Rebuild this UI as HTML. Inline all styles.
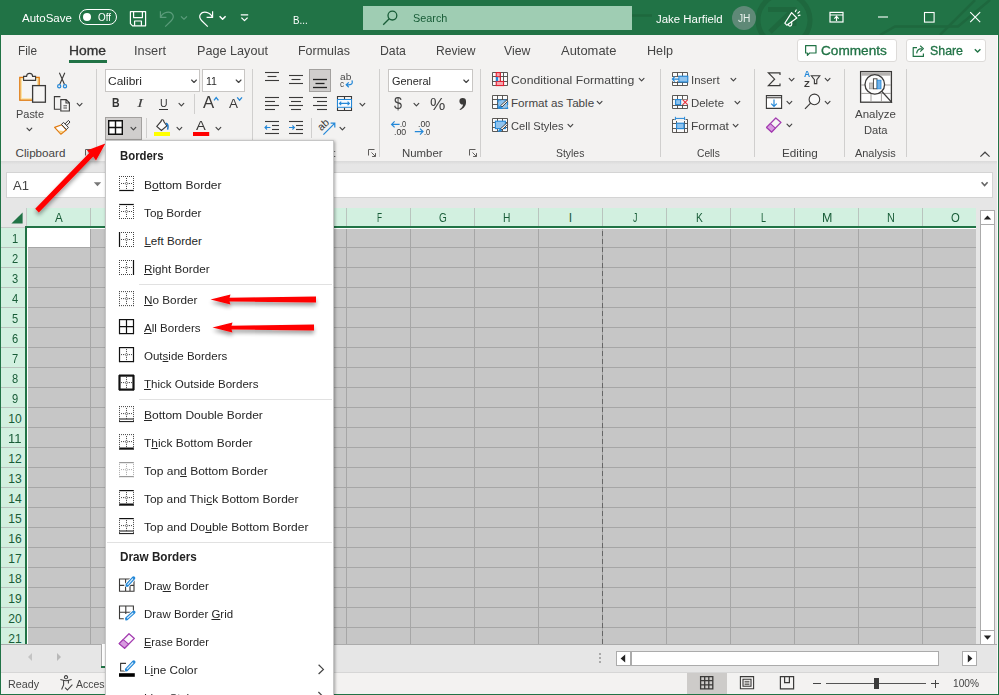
<!DOCTYPE html>
<html lang="en"><head><meta charset="utf-8"><title>Excel - Borders</title>
<style>
html,body{margin:0;padding:0}
body{width:999px;height:695px;overflow:hidden;position:relative;background:#f3f2f1;font-family:"Liberation Sans",sans-serif;}
.t{position:absolute;white-space:nowrap;line-height:1;transform-origin:0 50%;}
.t u{text-decoration:underline;text-underline-offset:1px;text-decoration-thickness:1px}
div{box-sizing:border-box}
svg{position:absolute;left:0;top:0;overflow:visible}
</style></head><body>
<div class="titlebar" style="position:absolute;left:0px;top:0px;width:999px;height:35px;background:#217346;"></div>
<svg width="999" height="35" viewBox="0 0 999 35"><clipPath id="tbc"><rect x="0" y="0" width="999" height="35"/></clipPath><g clip-path="url(#tbc)" fill="none" stroke="#1e683e"><circle cx="784" cy="20" r="26" stroke-width="5"/><path d="M768 9.5H794V26M793 10L770 32" stroke-width="5"/><path d="M880 35L895 26.5H958L990 0" stroke-width="2.5"/><path d="M940 35L975 0" stroke-width="2.5"/><path d="M632 15.5H652" stroke-width="2.5"/></g></svg>
<span class="t" style="left:22.00px;top:12px;font-size:11.64px;color:#fff;transform:scaleX(0.9901);">AutoSave</span>
<div style="position:absolute;left:79px;top:9px;width:38px;height:16px;border:1px solid #fff;border-radius:8px;"></div>
<div style="position:absolute;left:83px;top:13px;width:8px;height:8px;background:#fff;border-radius:4px;"></div>
<span class="t" style="left:98.00px;top:12px;font-size:10.67px;color:#fff;transform:scaleX(0.9244);">Off</span>
<span class="t" style="left:293.40px;top:14px;font-size:11.64px;color:#fff;transform:scaleX(0.8373);">B...</span>
<div class="search" style="position:absolute;left:363px;top:6px;width:269px;height:24px;background:#9fcdb3;"></div>
<span class="t" style="left:413.00px;top:12px;font-size:11.64px;color:#185c37;transform:scaleX(0.9329);">Search</span>
<span class="t" style="left:655.60px;top:13px;font-size:11.64px;color:#fff;transform:scaleX(0.9833);">Jake Harfield</span>
<div style="position:absolute;left:732px;top:6px;width:24px;height:24px;background:#5f8977;border-radius:12px;"></div>
<span class="t" style="left:737.50px;top:14px;font-size:10.19px;color:#e8f0ec;transform:scaleX(1.0050);">JH</span>
<span class="t" style="left:18.00px;top:45px;font-size:12.12px;color:#444;transform:scaleX(0.9744);">File</span>
<span class="t" style="left:134.00px;top:45px;font-size:12.12px;color:#444;transform:scaleX(1.0557);">Insert</span>
<span class="t" style="left:197.00px;top:45px;font-size:12.12px;color:#444;transform:scaleX(1.0432);">Page Layout</span>
<span class="t" style="left:298.00px;top:45px;font-size:12.12px;color:#444;transform:scaleX(1.0297);">Formulas</span>
<span class="t" style="left:380.40px;top:45px;font-size:12.12px;color:#444;transform:scaleX(1.0146);">Data</span>
<span class="t" style="left:436.40px;top:45px;font-size:12.12px;color:#444;transform:scaleX(0.9947);">Review</span>
<span class="t" style="left:504.00px;top:45px;font-size:12.12px;color:#444;transform:scaleX(1.0105);">View</span>
<span class="t" style="left:561.00px;top:45px;font-size:12.12px;color:#444;transform:scaleX(1.0680);">Automate</span>
<span class="t" style="left:647.40px;top:45px;font-size:12.12px;color:#444;transform:scaleX(1.0426);">Help</span>
<span class="t" style="left:69.00px;top:45px;font-size:12.12px;color:#333;-webkit-text-stroke:.3px currentColor;transform:scaleX(1.1451);">Home</span>
<div style="position:absolute;left:69px;top:60px;width:38px;height:3px;background:#217346;"></div>
<div style="position:absolute;left:797px;top:38.5px;width:99.5px;height:23px;background:#fff;border:1px solid #dddbd9;border-radius:3px;"></div>
<div style="position:absolute;left:905.5px;top:38.5px;width:80px;height:23px;background:#fff;border:1px solid #dddbd9;border-radius:3px;"></div>
<span class="t" style="left:821.00px;top:45px;font-size:12.12px;color:#217346;-webkit-text-stroke:.3px currentColor;transform:scaleX(1.1236);">Comments</span>
<span class="t" style="left:929.50px;top:45px;font-size:12.12px;color:#217346;-webkit-text-stroke:.3px currentColor;transform:scaleX(1.0213);">Share</span>
<div style="position:absolute;left:0px;top:161px;width:999px;height:8px;background:linear-gradient(#d9d9d9,#e6e6e6 45%,#e6e6e6);"></div>
<span class="t" style="left:162.00px;top:147px;font-size:11.64px;color:#444;transform:scaleX(1.0295);">Font</span>
<span class="t" style="left:281.00px;top:147px;font-size:11.64px;color:#444;transform:scaleX(1.0512);">Alignment</span>
<div style="position:absolute;left:96px;top:69px;width:1px;height:88px;background:#d0cfce;"></div>
<div style="position:absolute;left:252px;top:69px;width:1px;height:88px;background:#d0cfce;"></div>
<div style="position:absolute;left:379px;top:69px;width:1px;height:88px;background:#d0cfce;"></div>
<div style="position:absolute;left:480px;top:69px;width:1px;height:88px;background:#d0cfce;"></div>
<div style="position:absolute;left:660px;top:69px;width:1px;height:88px;background:#d0cfce;"></div>
<div style="position:absolute;left:754px;top:69px;width:1px;height:88px;background:#d0cfce;"></div>
<div style="position:absolute;left:844px;top:69px;width:1px;height:88px;background:#d0cfce;"></div>
<div style="position:absolute;left:906px;top:69px;width:1px;height:88px;background:#d0cfce;"></div>
<span class="t" style="left:16.40px;top:108px;font-size:11.64px;color:#444;transform:scaleX(0.9412);">Paste</span>
<span class="t" style="left:15.60px;top:147px;font-size:11.64px;color:#444;">Clipboard</span>
<div style="position:absolute;left:105px;top:69px;width:95px;height:23px;background:#fff;border:1px solid #c8c6c4;"></div>
<span class="t" style="left:108.00px;top:75px;font-size:11.64px;color:#2a2a2a;transform:scaleX(1.0303);">Calibri</span>
<div style="position:absolute;left:202px;top:69px;width:43px;height:23px;background:#fff;border:1px solid #c8c6c4;"></div>
<span class="t" style="left:205.60px;top:75px;font-size:11.64px;color:#2a2a2a;transform:scaleX(0.9119);">11</span>
<span class="t" style="left:112.40px;top:97px;font-size:12.12px;color:#333;font-weight:700;transform:scaleX(0.8686);">B</span>
<span class="t" style="left:137.09px;top:97px;font-size:12.61px;color:#444;font-style:italic;font-family:Liberation Serif,serif;transform:scaleX(1.4545);">I</span>
<span class="t" style="left:159.60px;top:97px;font-size:11.64px;color:#333;transform:scaleX(0.9007);">U</span>
<div style="position:absolute;left:159px;top:108.5px;width:9px;height:1px;background:#333;"></div>
<div style="position:absolute;left:194px;top:94px;width:1px;height:20px;background:#d0cfce;"></div>
<div style="position:absolute;left:105px;top:117px;width:37px;height:23px;background:#d0cecd;border:1px solid #a3a19f;"></div>
<div style="position:absolute;left:146px;top:118px;width:1px;height:20px;background:#d0cfce;"></div>
<div style="position:absolute;left:309px;top:69px;width:22px;height:23px;background:#d0cecd;border:1px solid #a3a19f;"></div>
<div style="position:absolute;left:311px;top:118px;width:1px;height:20px;background:#d0cfce;"></div>
<div style="position:absolute;left:388px;top:69px;width:85px;height:23px;background:#fff;border:1px solid #c8c6c4;"></div>
<span class="t" style="left:391.60px;top:75px;font-size:11.64px;color:#2a2a2a;transform:scaleX(0.9412);">General</span>
<span class="t" style="left:394.40px;top:95px;font-size:16.49px;color:#444;transform:scaleX(0.8707);">$</span>
<span class="t" style="left:430.00px;top:96px;font-size:16.49px;color:#444;transform:scaleX(1.0485);">%</span>
<span class="t" style="left:402.40px;top:147px;font-size:11.64px;color:#444;transform:scaleX(0.9813);">Number</span>
<span class="t" style="left:511.00px;top:74px;font-size:11.64px;color:#444;transform:scaleX(1.0536);">Conditional Formatting</span>
<span class="t" style="left:511.00px;top:97px;font-size:11.64px;color:#444;">Format as Table</span>
<span class="t" style="left:511.00px;top:120px;font-size:11.64px;color:#444;transform:scaleX(0.9564);">Cell Styles</span>
<span class="t" style="left:556.00px;top:147px;font-size:11.64px;color:#444;transform:scaleX(0.8963);">Styles</span>
<span class="t" style="left:691.00px;top:74px;font-size:11.64px;color:#444;transform:scaleX(0.9820);">Insert</span>
<span class="t" style="left:691.00px;top:97px;font-size:11.64px;color:#444;transform:scaleX(0.9814);">Delete</span>
<span class="t" style="left:691.00px;top:120px;font-size:11.64px;color:#444;transform:scaleX(1.0305);">Format</span>
<span class="t" style="left:696.60px;top:147px;font-size:11.64px;color:#444;transform:scaleX(0.8812);">Cells</span>
<span class="t" style="left:781.80px;top:147px;font-size:11.64px;color:#444;transform:scaleX(1.0095);">Editing</span>
<span class="t" style="left:855.00px;top:108px;font-size:11.64px;color:#444;transform:scaleX(0.9894);">Analyze</span>
<span class="t" style="left:864.40px;top:124px;font-size:11.64px;color:#444;transform:scaleX(0.9584);">Data</span>
<span class="t" style="left:855.00px;top:147px;font-size:11.64px;color:#444;transform:scaleX(0.9406);">Analysis</span>
<div style="position:absolute;left:0px;top:169px;width:999px;height:39px;background:#e6e6e6;"></div>
<div style="position:absolute;left:6px;top:172px;width:100px;height:26px;background:#fff;border:1px solid #d4d4d4;"></div>
<span class="t" style="left:13.00px;top:180px;font-size:12.61px;color:#444;transform:scaleX(1.0364);">A1</span>
<div style="position:absolute;left:333px;top:172px;width:660px;height:26px;background:#fff;border:1px solid #d4d4d4;border-left:none;"></div>
<div style="position:absolute;left:0px;top:208px;width:999px;height:437px;background:#e6e6e6;"></div>
<div class="colhead" style="position:absolute;left:1px;top:208px;width:975px;height:18px;background:#d2f0e0;"></div>
<div class="rowhead" style="position:absolute;left:1px;top:228px;width:24px;height:416px;background:#d2f0e0;"></div>
<div style="position:absolute;left:1px;top:208px;width:25px;height:20px;background:#e6e6e6;"></div>
<div style="position:absolute;left:26px;top:208px;width:1px;height:18px;background:#c9c9c9;"></div>
<div style="position:absolute;left:1px;top:227px;width:24px;height:1px;background:#c9c9c9;"></div>
<div class="cells" style="position:absolute;left:27px;top:228px;width:949px;height:416px;background:#c6c6c6;"></div>
<div style="position:absolute;left:28px;top:229px;width:62px;height:18px;background:#fff;"></div>
<span class="t" style="left:55.10px;top:212px;font-size:12.12px;color:#185c37;transform:scaleX(0.9600);">A</span>
<div style="position:absolute;left:90px;top:208px;width:1px;height:18px;background:#b9c4be;"></div>
<div style="position:absolute;left:90px;top:229px;width:1px;height:415px;background:#a6a6a6;"></div>
<span class="t" style="left:119.90px;top:212px;font-size:12.12px;color:#185c37;transform:scaleX(0.7690);">B</span>
<div style="position:absolute;left:154px;top:208px;width:1px;height:18px;background:#b9c4be;"></div>
<div style="position:absolute;left:154px;top:229px;width:1px;height:415px;background:#a6a6a6;"></div>
<span class="t" style="left:183.70px;top:212px;font-size:12.12px;color:#185c37;transform:scaleX(0.7543);">C</span>
<div style="position:absolute;left:218px;top:208px;width:1px;height:18px;background:#b9c4be;"></div>
<div style="position:absolute;left:218px;top:229px;width:1px;height:415px;background:#a6a6a6;"></div>
<span class="t" style="left:247.30px;top:212px;font-size:12.12px;color:#185c37;transform:scaleX(0.8457);">D</span>
<div style="position:absolute;left:282px;top:208px;width:1px;height:18px;background:#b9c4be;"></div>
<div style="position:absolute;left:282px;top:229px;width:1px;height:415px;background:#a6a6a6;"></div>
<span class="t" style="left:312.40px;top:212px;font-size:12.12px;color:#185c37;transform:scaleX(0.6450);">E</span>
<div style="position:absolute;left:346px;top:208px;width:1px;height:18px;background:#b9c4be;"></div>
<div style="position:absolute;left:346px;top:229px;width:1px;height:415px;background:#a6a6a6;"></div>
<span class="t" style="left:376.50px;top:212px;font-size:12.12px;color:#185c37;transform:scaleX(0.6780);">F</span>
<div style="position:absolute;left:410px;top:208px;width:1px;height:18px;background:#b9c4be;"></div>
<div style="position:absolute;left:410px;top:229px;width:1px;height:415px;background:#a6a6a6;"></div>
<span class="t" style="left:439.10px;top:212px;font-size:12.12px;color:#185c37;transform:scaleX(0.8265);">G</span>
<div style="position:absolute;left:474px;top:208px;width:1px;height:18px;background:#b9c4be;"></div>
<div style="position:absolute;left:474px;top:229px;width:1px;height:415px;background:#a6a6a6;"></div>
<span class="t" style="left:503.30px;top:212px;font-size:12.12px;color:#185c37;transform:scaleX(0.8457);">H</span>
<div style="position:absolute;left:538px;top:208px;width:1px;height:18px;background:#b9c4be;"></div>
<div style="position:absolute;left:538px;top:229px;width:1px;height:415px;background:#a6a6a6;"></div>
<span class="t" style="left:568.80px;top:212px;font-size:12.12px;color:#185c37;">I</span>
<div style="position:absolute;left:602px;top:208px;width:1px;height:18px;background:#b9c4be;"></div>
<div style="position:absolute;left:602px;top:229px;width:1px;height:415px;background:#a6a6a6;"></div>
<span class="t" style="left:632.80px;top:212px;font-size:12.12px;color:#185c37;transform:scaleX(0.7258);">J</span>
<div style="position:absolute;left:666px;top:208px;width:1px;height:18px;background:#b9c4be;"></div>
<div style="position:absolute;left:666px;top:229px;width:1px;height:415px;background:#a6a6a6;"></div>
<span class="t" style="left:695.60px;top:212px;font-size:12.12px;color:#185c37;transform:scaleX(0.8434);">K</span>
<div style="position:absolute;left:730px;top:208px;width:1px;height:18px;background:#b9c4be;"></div>
<div style="position:absolute;left:730px;top:229px;width:1px;height:415px;background:#a6a6a6;"></div>
<span class="t" style="left:760.50px;top:212px;font-size:12.12px;color:#185c37;transform:scaleX(0.7407);">L</span>
<div style="position:absolute;left:794px;top:208px;width:1px;height:18px;background:#b9c4be;"></div>
<div style="position:absolute;left:794px;top:229px;width:1px;height:415px;background:#a6a6a6;"></div>
<span class="t" style="left:821.80px;top:212px;font-size:12.12px;color:#185c37;transform:scaleX(1.0272);">M</span>
<div style="position:absolute;left:858px;top:208px;width:1px;height:18px;background:#b9c4be;"></div>
<div style="position:absolute;left:858px;top:229px;width:1px;height:415px;background:#a6a6a6;"></div>
<span class="t" style="left:887.10px;top:212px;font-size:12.12px;color:#185c37;transform:scaleX(0.8914);">N</span>
<div style="position:absolute;left:922px;top:208px;width:1px;height:18px;background:#b9c4be;"></div>
<div style="position:absolute;left:922px;top:229px;width:1px;height:415px;background:#a6a6a6;"></div>
<span class="t" style="left:950.60px;top:212px;font-size:12.12px;color:#185c37;transform:scaleX(0.9325);">O</span>
<span class="t" style="left:11.90px;top:233px;font-size:12.12px;color:#185c37;transform:scaleX(0.9185);">1</span>
<div style="position:absolute;left:1px;top:247px;width:24px;height:1px;background:#b9c4be;"></div>
<div style="position:absolute;left:28px;top:247px;width:948px;height:1px;background:#a6a6a6;"></div>
<span class="t" style="left:11.90px;top:253px;font-size:12.12px;color:#185c37;transform:scaleX(0.9185);">2</span>
<div style="position:absolute;left:1px;top:267px;width:24px;height:1px;background:#b9c4be;"></div>
<div style="position:absolute;left:28px;top:267px;width:948px;height:1px;background:#a6a6a6;"></div>
<span class="t" style="left:11.90px;top:273px;font-size:12.12px;color:#185c37;transform:scaleX(0.9185);">3</span>
<div style="position:absolute;left:1px;top:287px;width:24px;height:1px;background:#b9c4be;"></div>
<div style="position:absolute;left:28px;top:287px;width:948px;height:1px;background:#a6a6a6;"></div>
<span class="t" style="left:11.90px;top:293px;font-size:12.12px;color:#185c37;transform:scaleX(0.9185);">4</span>
<div style="position:absolute;left:1px;top:307px;width:24px;height:1px;background:#b9c4be;"></div>
<div style="position:absolute;left:28px;top:307px;width:948px;height:1px;background:#a6a6a6;"></div>
<span class="t" style="left:11.90px;top:313px;font-size:12.12px;color:#185c37;transform:scaleX(0.9185);">5</span>
<div style="position:absolute;left:1px;top:327px;width:24px;height:1px;background:#b9c4be;"></div>
<div style="position:absolute;left:28px;top:327px;width:948px;height:1px;background:#a6a6a6;"></div>
<span class="t" style="left:11.90px;top:333px;font-size:12.12px;color:#185c37;transform:scaleX(0.9185);">6</span>
<div style="position:absolute;left:1px;top:347px;width:24px;height:1px;background:#b9c4be;"></div>
<div style="position:absolute;left:28px;top:347px;width:948px;height:1px;background:#a6a6a6;"></div>
<span class="t" style="left:11.90px;top:353px;font-size:12.12px;color:#185c37;transform:scaleX(0.9185);">7</span>
<div style="position:absolute;left:1px;top:367px;width:24px;height:1px;background:#b9c4be;"></div>
<div style="position:absolute;left:28px;top:367px;width:948px;height:1px;background:#a6a6a6;"></div>
<span class="t" style="left:11.90px;top:373px;font-size:12.12px;color:#185c37;transform:scaleX(0.9185);">8</span>
<div style="position:absolute;left:1px;top:387px;width:24px;height:1px;background:#b9c4be;"></div>
<div style="position:absolute;left:28px;top:387px;width:948px;height:1px;background:#a6a6a6;"></div>
<span class="t" style="left:11.90px;top:393px;font-size:12.12px;color:#185c37;transform:scaleX(0.9185);">9</span>
<div style="position:absolute;left:1px;top:407px;width:24px;height:1px;background:#b9c4be;"></div>
<div style="position:absolute;left:28px;top:407px;width:948px;height:1px;background:#a6a6a6;"></div>
<span class="t" style="left:8.25px;top:413px;font-size:12.12px;color:#185c37;">10</span>
<div style="position:absolute;left:1px;top:427px;width:24px;height:1px;background:#b9c4be;"></div>
<div style="position:absolute;left:28px;top:427px;width:948px;height:1px;background:#a6a6a6;"></div>
<span class="t" style="left:8.25px;top:433px;font-size:12.12px;color:#185c37;transform:scaleX(1.0746);">11</span>
<div style="position:absolute;left:1px;top:447px;width:24px;height:1px;background:#b9c4be;"></div>
<div style="position:absolute;left:28px;top:447px;width:948px;height:1px;background:#a6a6a6;"></div>
<span class="t" style="left:8.25px;top:453px;font-size:12.12px;color:#185c37;">12</span>
<div style="position:absolute;left:1px;top:467px;width:24px;height:1px;background:#b9c4be;"></div>
<div style="position:absolute;left:28px;top:467px;width:948px;height:1px;background:#a6a6a6;"></div>
<span class="t" style="left:8.25px;top:473px;font-size:12.12px;color:#185c37;">13</span>
<div style="position:absolute;left:1px;top:487px;width:24px;height:1px;background:#b9c4be;"></div>
<div style="position:absolute;left:28px;top:487px;width:948px;height:1px;background:#a6a6a6;"></div>
<span class="t" style="left:8.25px;top:493px;font-size:12.12px;color:#185c37;">14</span>
<div style="position:absolute;left:1px;top:507px;width:24px;height:1px;background:#b9c4be;"></div>
<div style="position:absolute;left:28px;top:507px;width:948px;height:1px;background:#a6a6a6;"></div>
<span class="t" style="left:8.25px;top:513px;font-size:12.12px;color:#185c37;">15</span>
<div style="position:absolute;left:1px;top:527px;width:24px;height:1px;background:#b9c4be;"></div>
<div style="position:absolute;left:28px;top:527px;width:948px;height:1px;background:#a6a6a6;"></div>
<span class="t" style="left:8.25px;top:533px;font-size:12.12px;color:#185c37;">16</span>
<div style="position:absolute;left:1px;top:547px;width:24px;height:1px;background:#b9c4be;"></div>
<div style="position:absolute;left:28px;top:547px;width:948px;height:1px;background:#a6a6a6;"></div>
<span class="t" style="left:8.25px;top:553px;font-size:12.12px;color:#185c37;">17</span>
<div style="position:absolute;left:1px;top:567px;width:24px;height:1px;background:#b9c4be;"></div>
<div style="position:absolute;left:28px;top:567px;width:948px;height:1px;background:#a6a6a6;"></div>
<span class="t" style="left:8.25px;top:573px;font-size:12.12px;color:#185c37;">18</span>
<div style="position:absolute;left:1px;top:587px;width:24px;height:1px;background:#b9c4be;"></div>
<div style="position:absolute;left:28px;top:587px;width:948px;height:1px;background:#a6a6a6;"></div>
<span class="t" style="left:8.25px;top:593px;font-size:12.12px;color:#185c37;">19</span>
<div style="position:absolute;left:1px;top:607px;width:24px;height:1px;background:#b9c4be;"></div>
<div style="position:absolute;left:28px;top:607px;width:948px;height:1px;background:#a6a6a6;"></div>
<span class="t" style="left:8.25px;top:613px;font-size:12.12px;color:#185c37;">20</span>
<div style="position:absolute;left:1px;top:627px;width:24px;height:1px;background:#b9c4be;"></div>
<div style="position:absolute;left:28px;top:627px;width:948px;height:1px;background:#a6a6a6;"></div>
<span class="t" style="left:8.25px;top:633px;font-size:12.12px;color:#185c37;">21</span>
<div style="position:absolute;left:1px;top:647px;width:24px;height:1px;background:#b9c4be;"></div>
<div style="position:absolute;left:25px;top:226px;width:951px;height:2px;background:#217346;"></div>
<div style="position:absolute;left:25px;top:226px;width:2px;height:418px;background:#217346;"></div>
<div style="position:absolute;left:27px;top:228px;width:949px;height:1px;background:#fff;"></div>
<div style="position:absolute;left:27px;top:228px;width:1px;height:416px;background:#fff;"></div>
<div style="position:absolute;left:980px;top:210px;width:15px;height:15px;background:#fff;border:1px solid #ababab;"></div>
<div style="position:absolute;left:980px;top:225px;width:15px;height:405px;background:#fff;border:1px solid #ababab;border-top:none;border-bottom:none;"></div>
<div style="position:absolute;left:980px;top:630px;width:15px;height:15px;background:#fff;border:1px solid #ababab;"></div>
<div style="position:absolute;left:0px;top:644px;width:999px;height:28px;background:#e6e6e6;border-top:1px solid #ababab;"></div>
<div style="position:absolute;left:101px;top:644px;width:232px;height:24px;background:#fff;border-left:1px solid #ababab;"></div>
<div style="position:absolute;left:101px;top:666px;width:232px;height:2px;background:#217346;"></div>
<div style="position:absolute;left:616px;top:651px;width:15px;height:15px;background:#fff;border:1px solid #ababab;"></div>
<div style="position:absolute;left:631px;top:651px;width:308px;height:15px;background:#fff;border:1px solid #ababab;"></div>
<div style="position:absolute;left:962px;top:651px;width:15px;height:15px;background:#fff;border:1px solid #ababab;"></div>
<div style="position:absolute;left:599px;top:653px;width:2px;height:2px;background:#a9a9a9;"></div>
<div style="position:absolute;left:599px;top:657px;width:2px;height:2px;background:#a9a9a9;"></div>
<div style="position:absolute;left:599px;top:661px;width:2px;height:2px;background:#a9a9a9;"></div>
<div style="position:absolute;left:0px;top:672px;width:999px;height:23px;background:#f3f2f1;border-top:1px solid #d6d6d6;"></div>
<span class="t" style="left:7.90px;top:678px;font-size:11.64px;color:#444;transform:scaleX(0.9249);">Ready</span>
<span class="t" style="left:75.60px;top:678px;font-size:11.64px;color:#444;transform:scaleX(0.8994);">Accessibility</span>
<span class="t" style="left:134.00px;top:678px;font-size:11.64px;color:#444;transform:scaleX(0.8741);">: Good to go</span>
<span class="t" style="left:124.00px;top:651px;font-size:11.64px;color:#217346;font-weight:700;transform:scaleX(0.8903);">Sheet1</span>
<div style="position:absolute;left:687px;top:673px;width:40px;height:21px;background:#cdcbc9;"></div>
<span class="t" style="left:952.80px;top:678px;font-size:11.15px;color:#444;transform:scaleX(0.9088);">100%</span>
<div style="position:absolute;left:826px;top:683px;width:100px;height:1px;background:#555;"></div>
<div style="position:absolute;left:874px;top:678px;width:5px;height:11px;background:#3b3b3b;"></div>
<div style="position:absolute;left:813px;top:683px;width:8px;height:1px;background:#444;"></div>
<div style="position:absolute;left:931px;top:683px;width:8px;height:1px;background:#444;"></div>
<div style="position:absolute;left:934.5px;top:679.5px;width:1px;height:8px;background:#444;"></div>
<div style="position:absolute;left:0px;top:35px;width:1px;height:660px;background:#217346;"></div>
<div style="position:absolute;left:998px;top:35px;width:1px;height:660px;background:#217346;"></div>
<div style="position:absolute;left:997px;top:35px;width:1px;height:659px;background:#fbfbfb;"></div>
<div style="position:absolute;left:0px;top:693.8px;width:999px;height:1.2px;background:#217346;"></div>
<span class="t" style="left:196.40px;top:119px;font-size:13.09px;color:#3b3a39;transform:scaleX(1.1200);">A</span>
<span class="t" style="left:203.00px;top:95px;font-size:16.0px;color:#3b3a39;transform:scaleX(1.0480);">A</span>
<span class="t" style="left:228.80px;top:98px;font-size:12.61px;color:#3b3a39;transform:scaleX(1.0667);">A</span>
<span class="t" style="left:339.60px;top:72px;font-size:9.7px;color:#4a4a4a;transform:scaleX(1.0543);">ab</span>
<span class="t" style="left:340.00px;top:79px;font-size:9.7px;color:#4a4a4a;transform:scaleX(0.8615);">c</span>
<span class="t" style="left:399.80px;top:119px;font-size:9.8px;color:#3b3a39;transform:scaleX(0.7573);">.0</span>
<span class="t" style="left:393.80px;top:127px;font-size:9.8px;color:#3b3a39;transform:scaleX(0.8954);">.00</span>
<span class="t" style="left:418.00px;top:119px;font-size:9.8px;color:#3b3a39;transform:scaleX(0.8807);">.00</span>
<span class="t" style="left:423.80px;top:127px;font-size:9.8px;color:#3b3a39;transform:scaleX(0.7573);">.0</span>
<span class="t" style="left:804.20px;top:70px;font-size:8.73px;color:#2488d8;font-weight:700;transform:scaleX(0.9822);">A</span>
<span class="t" style="left:804.40px;top:80px;font-size:9.31px;color:#3b3a39;font-weight:700;transform:scaleX(1.0198);">Z</span>
<svg width="999" height="695" viewBox="0 0 999 695"><path d="M11.4 223.6L22.6 223.6L22.6 212.4Z" fill="#217346"/>
<path d="M602.5 231V644" stroke="#666" stroke-width="1" stroke-dasharray="5 3" fill="none"/>
<path d="M983.8 219.6L991.2 219.6L987.5 215.4Z" fill="#222"/>
<path d="M983.8 635.6L991.2 635.6L987.5 639.8Z" fill="#222"/>
<path d="M32 653L28 657L32 661Z" fill="#c4c4c4"/><path d="M57 653L61 657L57 661Z" fill="#b8b8b8"/>
<path d="M625.2 654.5L625.2 662.5L620.6 658.5Z" fill="#222"/><path d="M967.8 654.5L967.8 662.5L972.4 658.5Z" fill="#222"/>
<g id="qat" fill="none" stroke="#fff" stroke-width="1.2" stroke-linejoin="round">
<path d="M130.4 11.6H145.6V25.8H132.6L130.4 23.6Z"/><path d="M133.6 11.6V17.6H142.4V11.6"/><path d="M134.6 25.8V21H141.4V25.8"/>
<path d="M160.4 11.2V17.4H166.4M160.6 17.2C163 12 170 10.6 172.6 14.4C174.4 17.2 172.6 19.4 171 21L165.2 26.6" stroke="#5b9c7b"/>
<path d="M181 16.4L184 19.2L187 16.4" stroke="#5b9c7b"/>
<path d="M212.6 11.2V17.4H206.6M212.4 17.2C210 12 203 10.6 200.4 14.4C198.6 17.2 200.4 19.4 202 21L207.8 26.6"/>
<path d="M219.6 16.2L222.6 19.2L225.6 16.2" stroke-width="1.5"/>
<path d="M240.8 14.8H248.2M241.4 17.6L244.5 20.6L247.6 17.6" stroke-width="1.3"/>
</g>
<g fill="none" stroke="#185c37" stroke-width="1.3"><circle cx="392.4" cy="15.6" r="4.4"/><path d="M389.2 18.8L383.2 24.8"/></g>
<g fill="none" stroke="#fff" stroke-width="1.2" stroke-linejoin="round" stroke-linecap="round"><path d="M784.8 23.2L791.6 12.6L796.8 18L786.8 25.2Z"/><path d="M788.4 24.2C788.4 26.8 791.6 26.6 791.8 24L791.6 22"/><path d="M795.4 11.6L796.2 10M797.8 13.2L799.6 11.6M798.4 15.6L800 15.2"/></g>
<g fill="none" stroke="#fff" stroke-width="1.2"><rect x="830" y="12.4" width="13" height="9.6"/><path d="M830 15H843M836.5 21V16.6M834.3 18.6L836.5 16.4L838.7 18.6"/></g>
<g fill="none" stroke="#fff" stroke-width="1.1"><path d="M878 17H888"/><rect x="924.5" y="12.5" width="9.6" height="9.6"/><path d="M970.2 12.2L980.2 22.2M980.2 12.2L970.2 22.2"/></g>
<g fill="none" stroke="#217346" stroke-width="1.2" stroke-linejoin="round"><path d="M805.6 45.6H816V53H809.6L807.4 55.4V53H805.6Z"/>
<path d="M917 47.6H913.2V56.4H923.4V53.6"/><path d="M916.6 53.4C917 50.4 919 48.6 922 48.6M920.2 45.8L923.4 48.6L920.2 51.6"/>
<path d="M974.8 49.2L977.6 52L980.4 49.2" stroke-width="1.4"/></g>
<g id="paste">
<rect x="19.8" y="77.4" width="19.4" height="22.8" fill="#fbe2a4" stroke="#e07a10" stroke-width="1.3"/><rect x="22" y="79.6" width="15" height="18.6" fill="#f6f5f4"/>
<path d="M23.6 80.4V76.4H26.6C26.6 72.4 32.6 72.4 32.6 76.4H35.6V80.4Z" fill="#f6f5f4" stroke="#3b3a39" stroke-width="1.1"/>
<rect x="32.6" y="85.6" width="12.8" height="16.6" fill="#f6f5f4" stroke="#3b3a39" stroke-width="1.3"/>
</g>
<path d="M27.0 128.2L29.4 130.7L31.8 128.2" fill="none" stroke="#444" stroke-width="1.15" stroke-linecap="round" stroke-linejoin="round"/>
<path d="M59.4 72.8L64.4 84.2M64.8 72.8L59.8 84.2" fill="none" stroke="#3b3a39" stroke-width="1.1" />
<circle cx="59.2" cy="86.2" r="1.6" fill="none" stroke="#2488d8" stroke-width="1.2"/><circle cx="65" cy="86.2" r="1.6" fill="none" stroke="#2488d8" stroke-width="1.2"/>
<path d="M60.4 96.6H54.4V109.2H60" fill="none" stroke="#3b3a39" stroke-width="1.1" />
<path d="M60.8 99.6H66.2L69.4 102.8V111H60.8Z M66 99.8V103H69.2" fill="#f6f5f4" stroke="#3b3a39" stroke-width="1.1" />
<path d="M63.4 105.8H67M63.4 108H67" fill="none" stroke="#3b3a39" stroke-width="0.9" />
<path d="M77.2 103.3L79.6 105.8L82.0 103.3" fill="none" stroke="#444" stroke-width="1.15" stroke-linecap="round" stroke-linejoin="round"/>
<path d="M54.6 127.4L61.8 124.8L66.4 129.8L60.8 134.2Z" fill="#fdfdfd" stroke="#e07a10" stroke-width="1.2" stroke-linejoin="round"/><path d="M58.4 130.6L63.6 131L60.8 133.4Z" fill="#f8cf7c"/>
<path d="M61.4 124.4L63.6 122.4L68.4 127.4L66.4 129.6Z" fill="#f6f5f4" stroke="#3b3a39" stroke-width="1.0" />
<path d="M65.2 123.8L68.4 120.4L70 122L66.8 125.4Z" fill="#f6f5f4" stroke="#3b3a39" stroke-width="1.0" />
<path d="M91.5 149.5H85.5V155.5" fill="none" stroke="#605e5c" stroke-width="1" />
<path d="M88.5 152.5L92.5 156.5M92.5 153.1V156.5H89.1" fill="none" stroke="#605e5c" stroke-width="1" />
<path d="M374.5 149.5H368.5V155.5" fill="none" stroke="#605e5c" stroke-width="1" />
<path d="M371.5 152.5L375.5 156.5M375.5 153.1V156.5H372.1" fill="none" stroke="#605e5c" stroke-width="1" />
<path d="M475.5 149.5H469.5V155.5" fill="none" stroke="#605e5c" stroke-width="1" />
<path d="M472.5 152.5L476.5 156.5M476.5 153.1V156.5H473.1" fill="none" stroke="#605e5c" stroke-width="1" />
<path d="M191.6 80.0L194.0 82.5L196.4 80.0" fill="none" stroke="#444" stroke-width="1.15" stroke-linecap="round" stroke-linejoin="round"/>
<path d="M236.2 80.0L238.6 82.5L241.0 80.0" fill="none" stroke="#444" stroke-width="1.15" stroke-linecap="round" stroke-linejoin="round"/>
<path d="M179.0 103.3L181.4 105.8L183.8 103.3" fill="none" stroke="#444" stroke-width="1.15" stroke-linecap="round" stroke-linejoin="round"/>
<path d="M108.7 120.7H122.3V134.3H108.7ZM115.5 120.7V134.3M108.7 127.5H122.3" fill="#fff" stroke="#111" stroke-width="1.4" />
<path d="M131.0 127.3L133.4 129.8L135.8 127.3" fill="none" stroke="#444" stroke-width="1.15" stroke-linecap="round" stroke-linejoin="round"/>
<path d="M156.8 126.4L161.2 121.2V120.6C161.4 119.4 163.6 119.4 163.8 120.8V121.6L166.8 125.8L161.4 130.4Z" fill="#fbfbfb" stroke="#3b3a39" stroke-width="1.1" />
<path d="M166 123.2C167.8 124 168.6 126 167.6 129.6" fill="none" stroke="#1a74c4" stroke-width="1.5" />
<rect x="154" y="132" width="16" height="4" fill="#ffff00"/>
<path d="M177.0 127.3L179.4 129.8L181.8 127.3" fill="none" stroke="#444" stroke-width="1.15" stroke-linecap="round" stroke-linejoin="round"/>
<rect x="193" y="132" width="16.2" height="4" fill="#ff0000"/>
<path d="M216.0 127.3L218.4 129.8L220.8 127.3" fill="none" stroke="#444" stroke-width="1.15" stroke-linecap="round" stroke-linejoin="round"/>
<path d="M214 100.4L216.2 97.6L218.4 100.4" fill="none" stroke="#2488d8" stroke-width="1.3" />
<path d="M237.2 97.4L239.6 100.2L242 97.4" fill="none" stroke="#2488d8" stroke-width="1.3" />
<path d="M265 72.5H279" fill="none" stroke="#3b3a39" stroke-width="1.1" />
<path d="M267.5 76.5H276.5" fill="none" stroke="#3b3a39" stroke-width="1.1" />
<path d="M265 80.5H279" fill="none" stroke="#3b3a39" stroke-width="1.1" />
<path d="M289 75.5H303" fill="none" stroke="#3b3a39" stroke-width="1.1" />
<path d="M291.5 79.5H300.5" fill="none" stroke="#3b3a39" stroke-width="1.1" />
<path d="M289 83.5H303" fill="none" stroke="#3b3a39" stroke-width="1.1" />
<path d="M313 79.5H327" fill="none" stroke="#222" stroke-width="1.3" />
<path d="M315.5 83.5H324.5" fill="none" stroke="#222" stroke-width="1.3" />
<path d="M313 87.5H327" fill="none" stroke="#222" stroke-width="1.3" />
<path d="M265 97.5H279" fill="none" stroke="#3b3a39" stroke-width="1.1" />
<path d="M265 101.5H275" fill="none" stroke="#3b3a39" stroke-width="1.1" />
<path d="M265 105.5H279" fill="none" stroke="#3b3a39" stroke-width="1.1" />
<path d="M265 109.5H275" fill="none" stroke="#3b3a39" stroke-width="1.1" />
<path d="M289 97.5H303" fill="none" stroke="#3b3a39" stroke-width="1.1" />
<path d="M291 101.5H301" fill="none" stroke="#3b3a39" stroke-width="1.1" />
<path d="M289 105.5H303" fill="none" stroke="#3b3a39" stroke-width="1.1" />
<path d="M291 109.5H301" fill="none" stroke="#3b3a39" stroke-width="1.1" />
<path d="M313 97.5H327" fill="none" stroke="#3b3a39" stroke-width="1.1" />
<path d="M317 101.5H327" fill="none" stroke="#3b3a39" stroke-width="1.1" />
<path d="M313 105.5H327" fill="none" stroke="#3b3a39" stroke-width="1.1" />
<path d="M317 109.5H327" fill="none" stroke="#3b3a39" stroke-width="1.1" />
<path d="M352 80.4C353.2 84.6 350.6 85.2 346.4 84.8M348.8 82.4L346.2 84.8L348.8 87.2" fill="none" stroke="#2488d8" stroke-width="1.2" />
<path d="M337.5 96.5H351.5V110.5H337.5ZM344.5 96.5V99.5M344.5 107.5V110.5" fill="none" stroke="#3b3a39" stroke-width="1.1" />
<rect x="337.5" y="99.5" width="14" height="7.8" fill="#f4faff" stroke="#2488d8" stroke-width="1"/>
<path d="M339.4 103.4H349.4M341.2 101.6L339.4 103.4L341.2 105.2M347.6 101.6L349.4 103.4L347.6 105.2" fill="none" stroke="#2488d8" stroke-width="1.1" />
<path d="M360.0 103.3L362.4 105.8L364.8 103.3" fill="none" stroke="#444" stroke-width="1.15" stroke-linecap="round" stroke-linejoin="round"/>
<path d="M265 121.5H279" fill="none" stroke="#3b3a39" stroke-width="1.1" />
<path d="M272 125.5H279" fill="none" stroke="#3b3a39" stroke-width="1.1" />
<path d="M272 129.5H279" fill="none" stroke="#3b3a39" stroke-width="1.1" />
<path d="M265 133.5H279" fill="none" stroke="#3b3a39" stroke-width="1.1" />
<path d="M265 127.5H270.4M267 125.5L265 127.5L267 129.5" fill="none" stroke="#2488d8" stroke-width="1.1" />
<path d="M289 121.5H303" fill="none" stroke="#3b3a39" stroke-width="1.1" />
<path d="M296 125.5H303" fill="none" stroke="#3b3a39" stroke-width="1.1" />
<path d="M296 129.5H303" fill="none" stroke="#3b3a39" stroke-width="1.1" />
<path d="M289 133.5H303" fill="none" stroke="#3b3a39" stroke-width="1.1" />
<path d="M289 127.5H294.4M292.4 125.5L294.4 127.5L292.4 129.5" fill="none" stroke="#2488d8" stroke-width="1.1" />
<text transform="translate(321.2,131.2) rotate(-42)" font-size="10.5" fill="#3b3a39" font-family="Liberation Sans, sans-serif">ab</text>
<path d="M323.4 134.6L334.6 123.4M330.6 123.2H334.8V127.4" fill="none" stroke="#2488d8" stroke-width="1.2" />
<path d="M340.0 127.3L342.4 129.8L344.8 127.3" fill="none" stroke="#444" stroke-width="1.15" stroke-linecap="round" stroke-linejoin="round"/>
<path d="M463.8 80.0L466.2 82.5L468.6 80.0" fill="none" stroke="#444" stroke-width="1.15" stroke-linecap="round" stroke-linejoin="round"/>
<path d="M414.0 103.3L416.4 105.8L418.8 103.3" fill="none" stroke="#444" stroke-width="1.15" stroke-linecap="round" stroke-linejoin="round"/>
<path d="M459.4 101.2a3.3 3.3 0 1 1 6.6 0C466.4 105.4 464 108.4 460 110L459.6 109.2C461.8 108 463 106.4 463 104.6a3.3 3.3 0 0 1 -3.6 -3.4Z" fill="#3b3a39"/>
<path d="M391.6 124.4H399.6M394.6 121.4L391.6 124.4L394.6 127.4" fill="none" stroke="#2488d8" stroke-width="1.2" />
<path d="M414.8 131.6H423M420 128.6L423 131.6L420 134.6" fill="none" stroke="#2488d8" stroke-width="1.2" />
<path d="M492.5 72.5H507.5V85.5H492.5ZM496.5 72.5V85.5M500.5 72.5V85.5M503.5 72.5V85.5M492.5 76.5H507.5M492.5 81.5H507.5" fill="#fbfbfb" stroke="#484644" stroke-width="0.9" />
<rect x="496.2" y="72.6" width="4" height="4.2" fill="#f6a5ae" stroke="#e8192c" stroke-width="1"/>
<rect x="496.2" y="81.4" width="7.4" height="4.2" fill="#f6a5ae" stroke="#e8192c" stroke-width="1"/>
<rect x="495.8" y="77" width="2.4" height="4.2" fill="#2488d8"/>
<path d="M500.2 76.8V81.4" stroke="#e8192c" stroke-width="1" fill="none"/>
<path d="M639.2 78.3L641.6 80.8L644.0 78.3" fill="none" stroke="#444" stroke-width="1.15" stroke-linecap="round" stroke-linejoin="round"/>
<path d="M492.5 95.5H507.5V108.5H492.5ZM497.5 95.5V108.5M502.5 95.5V108.5M492.5 99.5H507.5M492.5 104.5H507.5" fill="#fbfbfb" stroke="#484644" stroke-width="0.9" />
<rect x="498" y="100" width="9.6" height="8.4" fill="#8fc3ee" stroke="#2488d8" stroke-width="1.1" stroke-dasharray="3.4 2.2"/>
<path d="M506.8 100L500.59999999999997 105.6L502.0 107L507.8 101.2Z" fill="#f6f5f4" stroke="#3b3a39" stroke-width="0.9" />
<path d="M500.4 105.8C498.59999999999997 106.4 498.4 108 497.2 108.6C499.59999999999997 109.2 501.59999999999997 108.6 502.0 107.2Z" fill="#2488d8"/>
<path d="M597.2 101.3L599.6 103.8L602.0 101.3" fill="none" stroke="#444" stroke-width="1.15" stroke-linecap="round" stroke-linejoin="round"/>
<path d="M492.5 118.5H507.5V131.5H492.5ZM497.5 118.5V131.5M502.5 118.5V131.5M492.5 122.5H507.5M492.5 127.5H507.5" fill="#fbfbfb" stroke="#484644" stroke-width="0.9" />
<rect x="495.4" y="121.2" width="10" height="7.4" fill="#8fc3ee" stroke="#2488d8" stroke-width="1.1"/>
<path d="M506.8 123L500.59999999999997 128.6L502.0 130L507.8 124.2Z" fill="#f6f5f4" stroke="#3b3a39" stroke-width="0.9" />
<path d="M500.4 128.8C498.59999999999997 129.4 498.4 131 497.2 131.6C499.59999999999997 132.2 501.59999999999997 131.6 502.0 130.2Z" fill="#2488d8"/>
<path d="M568.0 124.3L570.4 126.8L572.8 124.3" fill="none" stroke="#444" stroke-width="1.15" stroke-linecap="round" stroke-linejoin="round"/>
<path d="M672.5 72.5H687.5V85.5H672.5ZM677.5 72.5V85.5M682.5 72.5V85.5M672.5 76.5H687.5M672.5 82.5H687.5" fill="#fbfbfb" stroke="#484644" stroke-width="0.9" />
<rect x="678.8" y="76.2" width="9" height="5.8" fill="#8fc3ee" stroke="#2488d8" stroke-width="1.1"/>
<rect x="671" y="76.9" width="7.2" height="4.4" fill="#f3f2f1"/>
<path d="M672.4 79.1H679M674.8 76.6L672.4 79.1L674.8 81.6" fill="none" stroke="#2488d8" stroke-width="1.2" />
<path d="M731.0 78.3L733.4 80.8L735.8 78.3" fill="none" stroke="#444" stroke-width="1.15" stroke-linecap="round" stroke-linejoin="round"/>
<path d="M672.5 95.5H687.5V108.5H672.5ZM677.5 95.5V108.5M682.5 95.5V108.5M672.5 99.5H687.5M672.5 105.5H687.5" fill="#fbfbfb" stroke="#484644" stroke-width="0.9" />
<rect x="673.6" y="99.7" width="15" height="4.8" fill="#f3f2f1"/>
<rect x="675.6" y="99.6" width="5" height="5" fill="#8fc3ee" stroke="#2488d8" stroke-width="1.1"/>
<path d="M682.8 99.8L687.6 104.6M687.6 99.8L682.8 104.6" fill="none" stroke="#e8303c" stroke-width="1.1" />
<path d="M735.0 101.3L737.4 103.8L739.8 101.3" fill="none" stroke="#444" stroke-width="1.15" stroke-linecap="round" stroke-linejoin="round"/>
<path d="M672.5 119.5H687.5V132.5H672.5ZM676.5 119.5V132.5M684.5 119.5V132.5M672.5 123.5H687.5M672.5 128.5H687.5" fill="#fbfbfb" stroke="#484644" stroke-width="0.9" />
<rect x="674.6" y="118" width="11" height="3" fill="#f3f2f1"/>
<rect x="676.6" y="123.2" width="7.4" height="5.4" fill="#8fc3ee" stroke="#2488d8" stroke-width="1.1"/>
<path d="M675.4 118.4H684.6M675.4 116.8V120M684.6 116.8V120" fill="none" stroke="#2488d8" stroke-width="1" />
<path d="M733.2 124.3L735.6 126.8L738.0 124.3" fill="none" stroke="#444" stroke-width="1.15" stroke-linecap="round" stroke-linejoin="round"/>
<path d="M780 75V72.8H768.4L774.6 79.2L768.4 85.6H780V83.4" fill="none" stroke="#3b3a39" stroke-width="1.2" />
<path d="M789.2 78.3L791.6 80.8L794.0 78.3" fill="none" stroke="#444" stroke-width="1.15" stroke-linecap="round" stroke-linejoin="round"/>
<path d="M766.4 95.6H781.6V108.4H766.4ZM766.4 97.8H781.6" fill="#fff" stroke="#3b3a39" stroke-width="1.1" />
<path d="M774 99.4V106.2M771.2 103.6L774 106.4L776.8 103.6" fill="none" stroke="#2488d8" stroke-width="1.2" />
<path d="M787.0 101.3L789.4 103.8L791.8 101.3" fill="none" stroke="#444" stroke-width="1.15" stroke-linecap="round" stroke-linejoin="round"/>
<path d="M775.8 118L781 122.4L771.6 132L766.6 127.4Z" fill="#f6f5f4" stroke="#a33bb0" stroke-width="1.3" stroke-linejoin="round"/><path d="M770.4 123.6L775.4 128.2L771.6 132L766.6 127.4Z" fill="#d89be0" stroke="#a33bb0" stroke-width="1.1" stroke-linejoin="round"/>
<path d="M787.0 124.2L789.4 126.7L791.8 124.2" fill="none" stroke="#444" stroke-width="1.15" stroke-linecap="round" stroke-linejoin="round"/>
<path d="M811.4 75.8H819.8L816.8 79.6V83.6H814.4V79.6Z" fill="none" stroke="#3b3a39" stroke-width="1.1" />
<path d="M825.2 78.3L827.6 80.8L830.0 78.3" fill="none" stroke="#444" stroke-width="1.15" stroke-linecap="round" stroke-linejoin="round"/>
<circle cx="814.4" cy="99.4" r="5.3" fill="#f8f8f8" stroke="#3b3a39" stroke-width="1.1"/>
<path d="M810.6 103.2L805 108.8" fill="none" stroke="#3b3a39" stroke-width="1.2" />
<path d="M825.2 101.3L827.6 103.8L830.0 101.3" fill="none" stroke="#444" stroke-width="1.15" stroke-linecap="round" stroke-linejoin="round"/>
<rect x="860.6" y="71.6" width="30.8" height="30.6" fill="#fdfdfd" stroke="#3b3a39" stroke-width="1.3"/>
<rect x="861.3" y="72.3" width="29.4" height="3.4" fill="#b4b2b0"/>
<path d="M861 85H891M861 93.4H891M871 93.4V102M881.4 93.4V102" fill="none" stroke="#a19f9d" stroke-width="1" />
<circle cx="874.8" cy="84.4" r="9.8" fill="#fdfdfd" stroke="#3b3a39" stroke-width="1.3"/>
<path d="M881.8 91.4L892 102.6" fill="none" stroke="#3b3a39" stroke-width="1.4" />
<rect x="869.6" y="83" width="3.6" height="5.8" fill="#c8c6c4" stroke="#a19f9d" stroke-width=".8"/>
<rect x="873.4" y="78.8" width="3.6" height="10" fill="#fff" stroke="#3b3a39" stroke-width=".9"/>
<rect x="877.2" y="80.2" width="3.8" height="8.6" fill="#6fb1ea" stroke="#2488d8" stroke-width=".8"/>
<path d="M980.4 156.6L985 152.2L989.6 156.6" fill="none" stroke="#444" stroke-width="1.2" />
<path d="M93.8 182.2H101.2L97.5 186.2Z" fill="#777"/>
<path d="M981.6 182.2L984.6 185.6L987.6 182.2" fill="none" stroke="#666" stroke-width="1.6" />
<path d="M66 675.6a1.6 1.6 0 1 0 .01 0M60.4 679.6C64 681 68 681 71.6 679.6M63.6 680.6V685L61.6 689.4M68.4 680.6V683.6" fill="none" stroke="#444" stroke-width="1.1" />
<path d="M65 687.6L67.4 690L72.4 684.6" fill="none" stroke="#444" stroke-width="1.1" />
<path d="M700.6 676.6H712.8V688.8H700.6ZM704.7 676.6V688.8M708.8 676.6V688.8M700.6 680.7H712.8M700.6 684.8H712.8" fill="none" stroke="#3b3a39" stroke-width="1.3" />
<path d="M740.4 676.6H753.6V688.8H740.4ZM743 679.2H751V686.2H743Z" fill="none" stroke="#3b3a39" stroke-width="1.1" />
<path d="M744.6 681.4H749.4M744.6 683H749.4M744.6 684.6H749.4" fill="none" stroke="#3b3a39" stroke-width="0.8" />
<path d="M780.4 676.6H793.6V688.8H780.4ZM784.6 676.6V682.6H789.4V676.6" fill="none" stroke="#3b3a39" stroke-width="1.2" />
<defs><filter id="sh0" x="-30%" y="-30%" width="160%" height="160%"><feGaussianBlur in="SourceAlpha" stdDeviation="2"/><feOffset dx="0" dy="2.5"/><feComponentTransfer><feFuncA type="linear" slope=".4"/></feComponentTransfer><feMerge><feMergeNode/><feMergeNode in="SourceGraphic"/></feMerge></filter></defs>
<g filter="url(#sh0)"><path d="M105.4 143.4L96 160.4L93.2 156.6L38.8 212.4L35.2 208.8L89.4 152.8L86.8 150.4Z" fill="#ff0000"/></g></svg>
<div class="menu" style="position:absolute;left:105px;top:140px;width:229px;height:560px;background:#fff;border:1px solid #c6c6c6;box-shadow:1px 1px 3px rgba(0,0,0,.35);"></div>
<span class="t" style="left:120.40px;top:150px;font-size:12.12px;color:#222;font-weight:700;transform:scaleX(0.9376);">Borders</span>
<span class="t" style="left:144.40px;top:179px;font-size:11.64px;color:#262626;transform:scaleX(1.0338);">B<u>o</u>ttom Border</span>
<span class="t" style="left:144.40px;top:207px;font-size:11.64px;color:#262626;transform:scaleX(1.0116);">To<u>p</u> Border</span>
<span class="t" style="left:144.40px;top:235px;font-size:11.64px;color:#262626;"><u>L</u>eft Border</span>
<span class="t" style="left:144.40px;top:263px;font-size:11.64px;color:#262626;transform:scaleX(1.0044);"><u>R</u>ight Border</span>
<span class="t" style="left:144.40px;top:294px;font-size:11.64px;color:#262626;transform:scaleX(1.0101);"><u>N</u>o Border</span>
<span class="t" style="left:144.40px;top:322px;font-size:11.64px;color:#262626;transform:scaleX(0.9941);"><u>A</u>ll Borders</span>
<span class="t" style="left:144.40px;top:350px;font-size:11.64px;color:#262626;transform:scaleX(0.9914);">Out<u>s</u>ide Borders</span>
<span class="t" style="left:144.40px;top:378px;font-size:11.64px;color:#262626;transform:scaleX(0.9954);"><u>T</u>hick Outside Borders</span>
<span class="t" style="left:144.40px;top:409px;font-size:11.64px;color:#262626;transform:scaleX(1.0331);"><u>B</u>ottom Double Border</span>
<span class="t" style="left:144.40px;top:437px;font-size:11.64px;color:#262626;transform:scaleX(1.0239);">T<u>h</u>ick Bottom Border</span>
<span class="t" style="left:144.40px;top:465px;font-size:11.64px;color:#262626;transform:scaleX(1.0344);">Top an<u>d</u> Bottom Border</span>
<span class="t" style="left:144.40px;top:493px;font-size:11.64px;color:#262626;transform:scaleX(1.0268);">Top and Thi<u>c</u>k Bottom Border</span>
<span class="t" style="left:144.40px;top:521px;font-size:11.64px;color:#262626;transform:scaleX(1.0300);">Top and Do<u>u</u>ble Bottom Border</span>
<span class="t" style="left:144.40px;top:580px;font-size:11.64px;color:#262626;transform:scaleX(0.9937);">Dra<u>w</u> Border</span>
<span class="t" style="left:144.40px;top:608px;font-size:11.64px;color:#262626;transform:scaleX(0.9850);">Draw Border <u>G</u>rid</span>
<span class="t" style="left:144.40px;top:636px;font-size:11.64px;color:#262626;transform:scaleX(0.9466);"><u>E</u>rase Border</span>
<span class="t" style="left:144.40px;top:664px;font-size:11.64px;color:#262626;transform:scaleX(1.0101);">L<u>i</u>ne Color</span>
<span class="t" style="left:144.40px;top:692px;font-size:11.64px;color:#262626;transform:scaleX(1.0093);">Line St<u>y</u>le</span>
<span class="t" style="left:120.40px;top:551px;font-size:12.12px;color:#222;font-weight:700;transform:scaleX(0.9673);">Draw Borders</span>
<div style="position:absolute;left:139px;top:284px;width:193px;height:1px;background:#e1e1e1;"></div>
<div style="position:absolute;left:139px;top:399px;width:193px;height:1px;background:#e1e1e1;"></div>
<div style="position:absolute;left:107px;top:542px;width:225px;height:1px;background:#e1e1e1;"></div>
<svg width="999" height="695" viewBox="0 0 999 695"><path d="M119.0 176.5L134.0 176.5" stroke="#444" stroke-width="1" stroke-dasharray="1 1" fill="none"/><path d="M119.0 190.5L134.0 190.5" stroke="#111" stroke-width="1.2" fill="none"/><path d="M119.5 176.0L119.5 191.0" stroke="#444" stroke-width="1" stroke-dasharray="1 1" fill="none"/><path d="M133.5 176.0L133.5 191.0" stroke="#444" stroke-width="1" stroke-dasharray="1 1" fill="none"/><path d="M121.0 183.5H132.5M126.5 178.0V189.5" stroke="#444" stroke-width="1" stroke-dasharray="1 1" fill="none"/><rect x="125.5" y="182.5" width="2" height="2" fill="#fff" stroke="#444" stroke-width=".6" transform="rotate(45 126.5 183.5)"/><path d="M119.0 204.5L134.0 204.5" stroke="#111" stroke-width="1.2" fill="none"/><path d="M119.0 218.5L134.0 218.5" stroke="#444" stroke-width="1" stroke-dasharray="1 1" fill="none"/><path d="M119.5 204.0L119.5 219.0" stroke="#444" stroke-width="1" stroke-dasharray="1 1" fill="none"/><path d="M133.5 204.0L133.5 219.0" stroke="#444" stroke-width="1" stroke-dasharray="1 1" fill="none"/><path d="M121.0 211.5H132.5M126.5 206.0V217.5" stroke="#444" stroke-width="1" stroke-dasharray="1 1" fill="none"/><rect x="125.5" y="210.5" width="2" height="2" fill="#fff" stroke="#444" stroke-width=".6" transform="rotate(45 126.5 211.5)"/><path d="M119.0 232.5L134.0 232.5" stroke="#444" stroke-width="1" stroke-dasharray="1 1" fill="none"/><path d="M119.0 246.5L134.0 246.5" stroke="#444" stroke-width="1" stroke-dasharray="1 1" fill="none"/><path d="M119.5 232.0L119.5 247.0" stroke="#111" stroke-width="1.2" fill="none"/><path d="M133.5 232.0L133.5 247.0" stroke="#444" stroke-width="1" stroke-dasharray="1 1" fill="none"/><path d="M121.0 239.5H132.5M126.5 234.0V245.5" stroke="#444" stroke-width="1" stroke-dasharray="1 1" fill="none"/><rect x="125.5" y="238.5" width="2" height="2" fill="#fff" stroke="#444" stroke-width=".6" transform="rotate(45 126.5 239.5)"/><path d="M119.0 260.5L134.0 260.5" stroke="#444" stroke-width="1" stroke-dasharray="1 1" fill="none"/><path d="M119.0 274.5L134.0 274.5" stroke="#444" stroke-width="1" stroke-dasharray="1 1" fill="none"/><path d="M119.5 260.0L119.5 275.0" stroke="#444" stroke-width="1" stroke-dasharray="1 1" fill="none"/><path d="M133.5 260.0L133.5 275.0" stroke="#111" stroke-width="1.2" fill="none"/><path d="M121.0 267.5H132.5M126.5 262.0V273.5" stroke="#444" stroke-width="1" stroke-dasharray="1 1" fill="none"/><rect x="125.5" y="266.5" width="2" height="2" fill="#fff" stroke="#444" stroke-width=".6" transform="rotate(45 126.5 267.5)"/><path d="M119.0 291.6L134.0 291.6" stroke="#444" stroke-width="1" stroke-dasharray="1 1" fill="none"/><path d="M119.0 305.6L134.0 305.6" stroke="#444" stroke-width="1" stroke-dasharray="1 1" fill="none"/><path d="M119.5 291.1L119.5 306.1" stroke="#444" stroke-width="1" stroke-dasharray="1 1" fill="none"/><path d="M133.5 291.1L133.5 306.1" stroke="#444" stroke-width="1" stroke-dasharray="1 1" fill="none"/><path d="M121.0 298.6H132.5M126.5 293.1V304.6" stroke="#444" stroke-width="1" stroke-dasharray="1 1" fill="none"/><rect x="125.5" y="297.6" width="2" height="2" fill="#fff" stroke="#444" stroke-width=".6" transform="rotate(45 126.5 298.6)"/><path d="M119.0 319.6L134.0 319.6" stroke="#111" stroke-width="1.2" fill="none"/><path d="M119.0 333.6L134.0 333.6" stroke="#111" stroke-width="1.2" fill="none"/><path d="M119.5 319.1L119.5 334.1" stroke="#111" stroke-width="1.2" fill="none"/><path d="M133.5 319.1L133.5 334.1" stroke="#111" stroke-width="1.2" fill="none"/><path d="M119.5 326.6H133.5M126.5 319.6V333.6" stroke="#111" stroke-width="1.2" fill="none"/><path d="M119.0 347.6L134.0 347.6" stroke="#111" stroke-width="1.2" fill="none"/><path d="M119.0 361.6L134.0 361.6" stroke="#111" stroke-width="1.2" fill="none"/><path d="M119.5 347.1L119.5 362.1" stroke="#111" stroke-width="1.2" fill="none"/><path d="M133.5 347.1L133.5 362.1" stroke="#111" stroke-width="1.2" fill="none"/><path d="M121.0 354.6H132.5M126.5 349.1V360.6" stroke="#444" stroke-width="1" stroke-dasharray="1 1" fill="none"/><rect x="125.5" y="353.6" width="2" height="2" fill="#fff" stroke="#444" stroke-width=".6" transform="rotate(45 126.5 354.6)"/><path d="M119.0 375.6L134.0 375.6" stroke="#111" stroke-width="2.2" fill="none"/><path d="M119.0 389.6L134.0 389.6" stroke="#111" stroke-width="2.2" fill="none"/><path d="M119.5 375.1L119.5 390.1" stroke="#111" stroke-width="2.2" fill="none"/><path d="M133.5 375.1L133.5 390.1" stroke="#111" stroke-width="2.2" fill="none"/><path d="M121.0 382.6H132.5M126.5 377.1V388.6" stroke="#444" stroke-width="1" stroke-dasharray="1 1" fill="none"/><rect x="125.5" y="381.6" width="2" height="2" fill="#fff" stroke="#444" stroke-width=".6" transform="rotate(45 126.5 382.6)"/><path d="M119.0 406.6L134.0 406.6" stroke="#444" stroke-width="1" stroke-dasharray="1 1" fill="none"/><path d="M119.0 421.6L134.0 421.6M119.0 419.0L134.0 419.0" stroke="#111" stroke-width="1" fill="none"/><path d="M119.5 406.1L119.5 421.1" stroke="#444" stroke-width="1" stroke-dasharray="1 1" fill="none"/><path d="M133.5 406.1L133.5 421.1" stroke="#444" stroke-width="1" stroke-dasharray="1 1" fill="none"/><path d="M121.0 413.6H132.5M126.5 408.1V419.6" stroke="#444" stroke-width="1" stroke-dasharray="1 1" fill="none"/><rect x="125.5" y="412.6" width="2" height="2" fill="#fff" stroke="#444" stroke-width=".6" transform="rotate(45 126.5 413.6)"/><path d="M119.0 434.6L134.0 434.6" stroke="#444" stroke-width="1" stroke-dasharray="1 1" fill="none"/><path d="M119.0 448.6L134.0 448.6" stroke="#111" stroke-width="2.2" fill="none"/><path d="M119.5 434.1L119.5 449.1" stroke="#444" stroke-width="1" stroke-dasharray="1 1" fill="none"/><path d="M133.5 434.1L133.5 449.1" stroke="#444" stroke-width="1" stroke-dasharray="1 1" fill="none"/><path d="M121.0 441.6H132.5M126.5 436.1V447.6" stroke="#444" stroke-width="1" stroke-dasharray="1 1" fill="none"/><rect x="125.5" y="440.6" width="2" height="2" fill="#fff" stroke="#444" stroke-width=".6" transform="rotate(45 126.5 441.6)"/><path d="M119.0 462.6L134.0 462.6" stroke="#999" stroke-width="1.2" fill="none"/><path d="M119.0 476.6L134.0 476.6" stroke="#999" stroke-width="1.2" fill="none"/><path d="M119.5 462.1L119.5 477.1" stroke="#aaa" stroke-width="1" stroke-dasharray="1 1" fill="none"/><path d="M133.5 462.1L133.5 477.1" stroke="#aaa" stroke-width="1" stroke-dasharray="1 1" fill="none"/><path d="M121.0 469.6H132.5M126.5 464.1V475.6" stroke="#aaa" stroke-width="1" stroke-dasharray="1 1" fill="none"/><rect x="125.5" y="468.6" width="2" height="2" fill="#fff" stroke="#aaa" stroke-width=".6" transform="rotate(45 126.5 469.6)"/><path d="M119.0 490.6L134.0 490.6" stroke="#111" stroke-width="1.2" fill="none"/><path d="M119.0 504.6L134.0 504.6" stroke="#111" stroke-width="2.2" fill="none"/><path d="M119.5 490.1L119.5 505.1" stroke="#444" stroke-width="1" stroke-dasharray="1 1" fill="none"/><path d="M133.5 490.1L133.5 505.1" stroke="#444" stroke-width="1" stroke-dasharray="1 1" fill="none"/><path d="M121.0 497.6H132.5M126.5 492.1V503.6" stroke="#444" stroke-width="1" stroke-dasharray="1 1" fill="none"/><rect x="125.5" y="496.6" width="2" height="2" fill="#fff" stroke="#444" stroke-width=".6" transform="rotate(45 126.5 497.6)"/><path d="M119.0 518.6L134.0 518.6" stroke="#111" stroke-width="1.2" fill="none"/><path d="M119.0 533.6L134.0 533.6M119.0 531.0L134.0 531.0" stroke="#111" stroke-width="1" fill="none"/><path d="M119.5 518.1L119.5 533.1" stroke="#444" stroke-width="1" stroke-dasharray="1 1" fill="none"/><path d="M133.5 518.1L133.5 533.1" stroke="#444" stroke-width="1" stroke-dasharray="1 1" fill="none"/><path d="M121.0 525.6H132.5M126.5 520.1V531.6" stroke="#444" stroke-width="1" stroke-dasharray="1 1" fill="none"/><rect x="125.5" y="524.6" width="2" height="2" fill="#fff" stroke="#444" stroke-width=".6" transform="rotate(45 126.5 525.6)"/><path d="M119.5 579H134V591.2H119.5ZM125.6 579V591.2M119.5 585.4H134M130 585.4V591.2" stroke="#3b3a39" stroke-width="1.1" fill="none"/><path d="M125.6 586.8L134.2 577.4" stroke="#fff" stroke-width="5" stroke-linecap="butt" fill="none"/><path d="M127.19999999999999 585.0L133.6 578.0" stroke="#2488d8" stroke-width="3.4" stroke-linecap="round" fill="none"/><path d="M127.6 584.5999999999999L132.6 579.0" stroke="#d6ebfa" stroke-width="1.2" stroke-linecap="round" fill="none"/><path d="M125.6 586.8L126.39999999999999 583.8L128.6 586.0Z" fill="#2488d8"/><path d="M119.5 606H133.4V618.8H119.5ZM125.8 606V618.8M119.5 612.2H133.4" stroke="#3b3a39" stroke-width="1.1" fill="none"/><rect x="124" y="614" width="11" height="7" fill="#fff"/><path d="M125.2 620.4L134.4 611.6" stroke="#fff" stroke-width="5" stroke-linecap="butt" fill="none"/><path d="M126.8 618.6L133.8 612.2" stroke="#2488d8" stroke-width="3.4" stroke-linecap="round" fill="none"/><path d="M127.2 618.1999999999999L132.8 613.2" stroke="#d6ebfa" stroke-width="1.2" stroke-linecap="round" fill="none"/><path d="M125.2 620.4L126.0 617.4L128.2 619.6Z" fill="#2488d8"/><path d="M129 633.8L134.4 638.4L124.6 648.2L119.2 643.6Z" fill="#fbf7fc" stroke="#a33bb0" stroke-width="1.3" stroke-linejoin="round"/><path d="M123.2 639.6L128.6 644.2L124.6 648.2L119.2 643.6Z" fill="#d89be0" stroke="#a33bb0" stroke-width="1.1" stroke-linejoin="round"/><path d="M126 663.4H120.6V671H126" stroke="#3b3a39" stroke-width="1.1" fill="none"/><path d="M125 671.4L134.4 661.4" stroke="#fff" stroke-width="5" stroke-linecap="butt" fill="none"/><path d="M126.6 669.6L133.8 662.0" stroke="#2488d8" stroke-width="3.4" stroke-linecap="round" fill="none"/><path d="M127 669.1999999999999L132.8 663.0" stroke="#d6ebfa" stroke-width="1.2" stroke-linecap="round" fill="none"/><path d="M125 671.4L125.8 668.4L128 670.6Z" fill="#2488d8"/><rect x="119" y="673.2" width="15.8" height="3.6" fill="#000"/><path d="M318.6 664.8L323.4 669.4L318.6 674" stroke="#444" stroke-width="1.2" fill="none"/><path d="M318.4 692L323.8 697.4" stroke="#444" stroke-width="1.2" fill="none"/></svg>
<svg width="999" height="695" viewBox="0 0 999 695"><defs><filter id="sh" x="-20%" y="-50%" width="140%" height="220%"><feGaussianBlur in="SourceAlpha" stdDeviation="2"/><feOffset dx="0" dy="2.5" result="b"/><feComponentTransfer><feFuncA type="linear" slope=".4"/></feComponentTransfer><feMerge><feMergeNode/><feMergeNode in="SourceGraphic"/></feMerge></filter></defs>
<g filter="url(#sh)"><path d="M210.5 299.6L230.5 294.6L229.5 297.8L316 296.6L316 302.6L229.5 301.40000000000003L230.5 304.6Z" fill="#ff0000"/><path d="M212.5 327.6L232.5 322.6L231.5 325.8L314 324.6L314 330.6L231.5 329.40000000000003L232.5 332.6Z" fill="#ff0000"/></g></svg>
</body></html>
